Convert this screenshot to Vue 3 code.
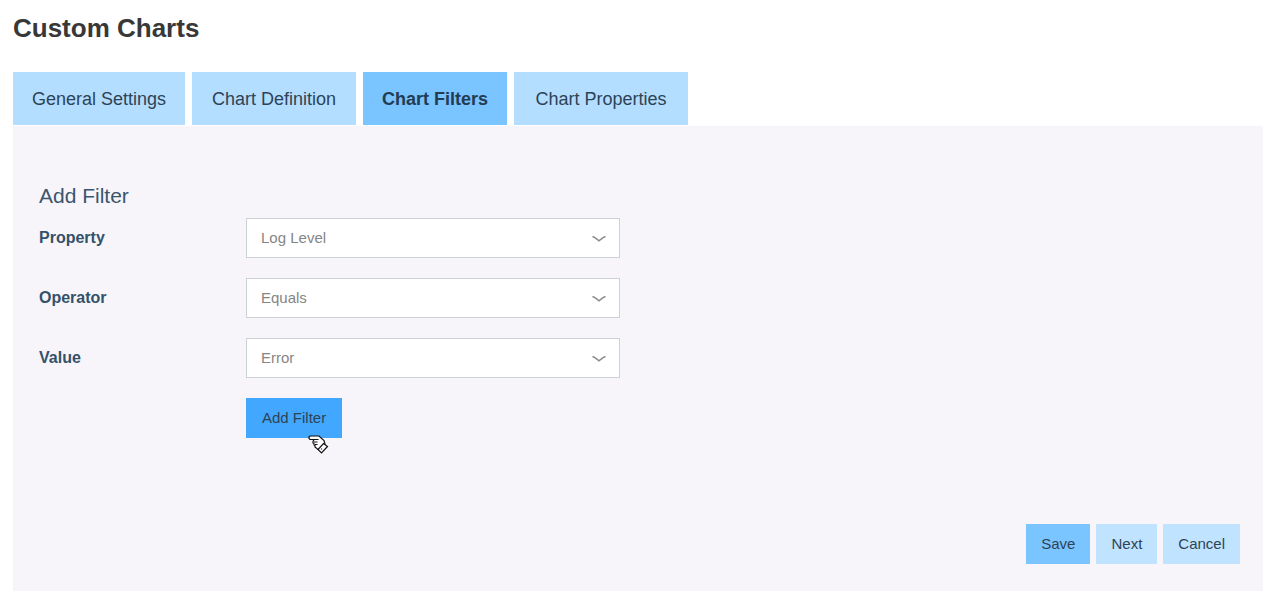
<script setup>
import { ref } from 'vue'

const tabs = ['General Settings', 'Chart Definition', 'Chart Filters', 'Chart Properties']
const activeTab = ref('Chart Filters')

const fields = ref([
  { id: 'property', label: 'Property', value: 'Log Level' },
  { id: 'operator', label: 'Operator', value: 'Equals' },
  { id: 'value', label: 'Value', value: 'Error' },
])
</script>

<template>
  <main class="page">
    <h1 class="title">Custom Charts</h1>

    <nav class="tabs" role="tablist">
      <button
        v-for="tab in tabs"
        :key="tab"
        type="button"
        role="tab"
        class="tab"
        :class="{ active: tab === activeTab }"
        :aria-selected="tab === activeTab"
        @click="activeTab = tab"
      >{{ tab }}</button>
    </nav>

    <form class="panel" @submit.prevent>
      <h2 class="heading">Add Filter</h2>
      <div class="fields">
        <div v-for="field in fields" :key="field.id" class="field">
          <label class="label" :for="field.id">{{ field.label }}</label>
          <div class="control">
            <select :id="field.id" v-model="field.value" class="select">
              <option>{{ field.value }}</option>
            </select>
            <svg class="chevron" width="14" height="8" viewBox="0 0 14 8" aria-hidden="true">
              <path d="M0.5 1.5L3 2.6L7 5.8L11 2.6L13.5 1.5" />
            </svg>
          </div>
        </div>
        <div class="add-row">
          <button type="button" class="btn add">Add Filter</button>
          <svg class="pointer" width="22" height="20" viewBox="0 0 22 20" aria-hidden="true">
            <path
              class="hand"
              d="M2 1H11L16 5.5L17 9L11.5 14.5H10L7 12V10.5L6 10V8.5L5 8V6.5L6 4.5H2L1 3.5V2Z"
            />
            <path class="fingers" d="M6 4.5H10.5M6 7H9.5M7 9.5H9.5" />
            <path class="hand" d="M15.5 8.5L19.5 11.5L13.5 18L10 14.5Z" />
            <path class="fingers" d="M13.5 13.5V14.5" />
          </svg>
        </div>
      </div>
      <div class="actions">
        <button type="submit" class="btn save">Save</button>
        <button type="button" class="btn">Next</button>
        <button type="button" class="btn">Cancel</button>
      </div>
    </form>
  </main>
</template>

<style>
body {
  background: #fff;
}
</style>

<style scoped>
.page {
  padding: 12px 0 20px 13px;
  font-family: "Liberation Sans", Arial, sans-serif;
  color: #2d3e4e;
}

.title {
  margin: 0 0 28px;
  font-size: 26px;
  line-height: 32px;
  font-weight: 700;
  color: #383838;
}

.tabs {
  display: grid;
  grid-template-columns: 172px 164px 144px 174px;
  gap: 7px;
}

.tab {
  height: 53px;
  padding: 0;
  border: 0;
  background: #b4deff;
  color: #2d4356;
  font: 400 18px/24px "Liberation Sans", Arial, sans-serif;
}

.tab.active {
  background: #7ac4ff;
  color: #223c52;
  font-weight: 700;
}

.panel {
  margin-top: 1px;
  padding: 56px 23px 27px 26px;
  background: #f7f5f9;
}

.heading {
  margin: 0 0 8px;
  font-size: 21px;
  line-height: 28px;
  font-weight: 400;
  color: #3a566e;
}

.fields {
  display: grid;
  gap: 20px;
}

.field {
  display: flex;
  align-items: center;
}

.label {
  width: 207px;
  font-size: 16px;
  line-height: 20px;
  font-weight: 700;
  color: #34516a;
}

.control {
  position: relative;
  width: 374px;
}

.select {
  display: block;
  width: 100%;
  height: 40px;
  padding: 0 40px 0 14px;
  border: 1px solid #cdd3d4;
  border-radius: 0;
  appearance: none;
  background: #fff;
  color: #858585;
  font: 400 15px/20px "Liberation Sans", Arial, sans-serif;
}

.chevron {
  position: absolute;
  right: 14px;
  top: 17px;
  fill: none;
  stroke: #8a8a8a;
  stroke-width: 1.5;
}

.add-row {
  position: relative;
  justify-self: start;
  margin-left: 207px;
}

.btn {
  height: 40px;
  padding: 0 15px;
  border: 0;
  background: #c0e4ff;
  color: #2d4356;
  font: 400 15px/20px "Liberation Sans", Arial, sans-serif;
}

.btn.add {
  display: block;
  padding: 0 16px;
  background: #42a7ff;
}

.btn.save {
  background: #7ac4ff;
}

.pointer {
  position: absolute;
  right: 12px;
  bottom: -17px;
}

.hand {
  fill: #fff;
  stroke: #111;
  stroke-width: 1.2;
}

.fingers {
  fill: none;
  stroke: #111;
  stroke-width: 1.2;
}

.actions {
  display: flex;
  justify-content: flex-end;
  gap: 6px;
  margin-top: 86px;
}
</style>
